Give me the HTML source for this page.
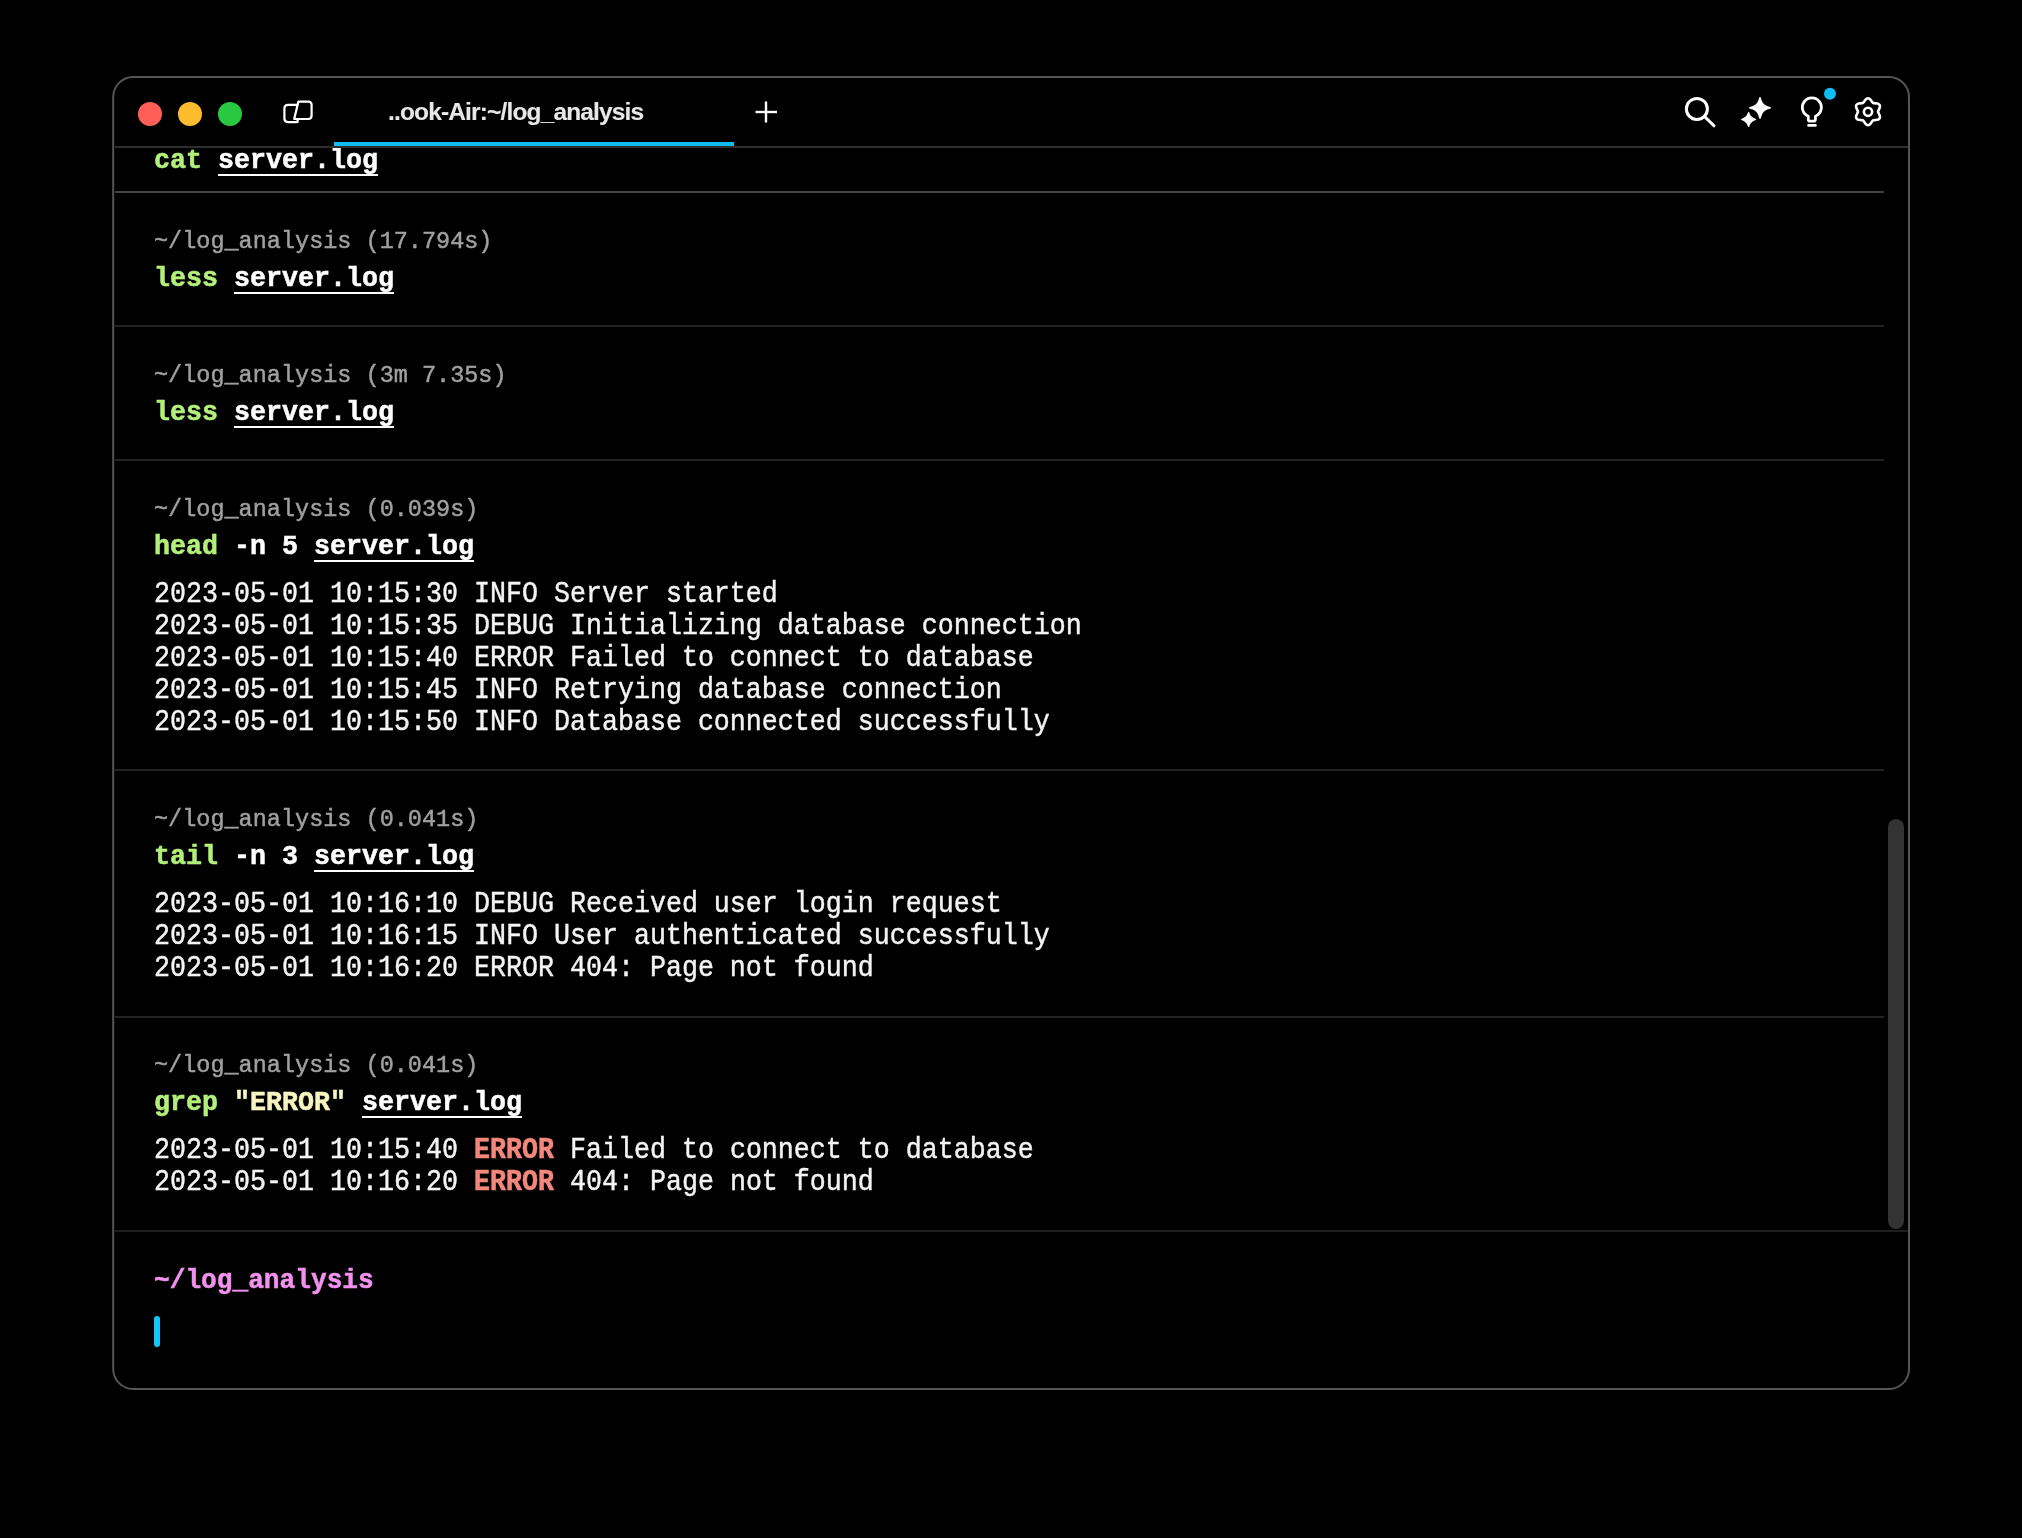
<!DOCTYPE html>
<html><head><meta charset="utf-8">
<style>
html,body{margin:0;padding:0;background:#000;width:2022px;height:1538px;overflow:hidden}
#clip{position:absolute;left:115px;top:148px;width:1793px;height:1240px;overflow:hidden}
.l{position:absolute;left:39px;white-space:pre;font-family:"Liberation Mono",monospace;font-size:26.667px;line-height:32px;height:32px;color:#f4f4f4;transform-origin:0 23px;-webkit-text-stroke:0.3px currentColor;will-change:transform}
.o{transform:scaleY(1.10);-webkit-text-stroke:0.4px currentColor}
.c{transform:scaleY(1.07)}
.p{font-size:23.5px;color:#a0a0a0;transform-origin:0 22px;transform:scaleY(1.05);-webkit-text-stroke:0.45px currentColor}
.g{color:#b3f07a;font-weight:bold;-webkit-text-stroke:0.5px currentColor}
.w{color:#fff;font-weight:bold;-webkit-text-stroke:0.5px currentColor}
.u{}
.ul{position:absolute;height:2px;width:160px;background:#fff}
.r{color:#f3877c;font-weight:bold;-webkit-text-stroke:0.5px currentColor}
.y{color:#f7f5c0;font-weight:bold;-webkit-text-stroke:0.5px currentColor}
.pk{color:#f291ee;font-weight:bold;-webkit-text-stroke:0.5px currentColor;font-size:26.17px;transform:scaleY(1.06)}
#title{position:absolute;left:388px;top:96px;font-family:"Liberation Sans",sans-serif;font-size:24.5px;font-weight:bold;letter-spacing:-0.85px;line-height:32px;color:#e8e8e8;white-space:pre;-webkit-text-stroke:0.1px #e8e8e8;will-change:transform}
svg{position:absolute;left:0;top:0}
</style></head><body>
<svg width="2022" height="1538" viewBox="0 0 2022 1538">
  <rect x="113.2" y="77" width="1795.8" height="1312" rx="20" ry="20" fill="none" stroke="#555" stroke-width="2"/>
  <!-- tab bar line -->
  <rect x="115" y="146" width="1793" height="2" fill="#2e2e2e"/>
  <!-- active tab underline -->
  <rect x="334" y="142" width="400" height="4" fill="#0dbdf5"/>
  <!-- traffic lights -->
  <circle cx="150" cy="114" r="12" fill="#ff5f57"/>
  <circle cx="190" cy="114" r="12" fill="#febc2e"/>
  <circle cx="230" cy="114" r="12" fill="#28c840"/>
  <!-- panel icon -->
  <g fill="none" stroke="#fff" stroke-width="2.2" stroke-linejoin="round">
    <path d="M297.3 104.8 H288 Q284.4 104.8 284.4 108.4 V118.6 Q284.4 122.1 288 122.1 H297.6 V119.2"/>
    <path d="M298.4 101.6 H308.2 Q311.6 101.6 311.6 105 V115.6 Q311.6 119 308.2 119 H294.2 Z"/>
  </g>
  <!-- plus -->
  <g stroke="#fff" stroke-width="2.4">
    <line x1="755.5" y1="112" x2="777" y2="112"/>
    <line x1="766" y1="101.5" x2="766" y2="122.5"/>
  </g>
  <!-- search -->
  <g fill="none" stroke="#fff" stroke-width="3" stroke-linecap="round">
    <circle cx="1696.9" cy="108.9" r="10.5"/>
    <line x1="1704.6" y1="116.6" x2="1714" y2="125.8"/>
  </g>
  <!-- sparkles -->
  <g fill="#fff" stroke="#fff" stroke-width="1.2" stroke-linejoin="round">
    <path d="M1760.00 97.50 C1761.50 103.90 1764.00 106.40 1770.40 107.90 C1764.00 109.40 1761.50 111.90 1760.00 118.30 C1758.50 111.90 1756.00 109.40 1749.60 107.90 C1756.00 106.40 1758.50 103.90 1760.00 97.50Z"/>
    <path d="M1748.60 112.50 C1749.80 116.60 1751.50 118.30 1755.60 119.50 C1751.50 120.70 1749.80 122.40 1748.60 126.50 C1747.40 122.40 1745.70 120.70 1741.60 119.50 C1745.70 118.30 1747.40 116.60 1748.60 112.50Z"/>
  </g>
  <!-- bulb -->
  <g fill="none" stroke="#fff" stroke-width="2.8" stroke-linecap="round" stroke-linejoin="round">
    <path d="M1808.3 116.2 A9.5 9.5 0 1 1 1815.4 116.2 V119.5 Q1815.4 121.2 1813.7 121.2 H1810 Q1808.3 121.2 1808.3 119.5 Z"/>
    <line x1="1808.6" y1="125.4" x2="1815.4" y2="125.4"/>
  </g>
  <circle cx="1830" cy="93.8" r="6" fill="#0dbdf5"/>
  <!-- gear -->
  <g fill="none" stroke="#fff" stroke-width="2.6" stroke-linejoin="round">
    <path d="M1865.66 99.49A2.90 2.90 0 0 1 1870.34 99.49L1872.58 102.55A1.50 1.50 0 0 0 1873.63 103.15L1877.41 103.57A2.90 2.90 0 0 1 1879.74 107.62L1878.22 111.10A1.50 1.50 0 0 0 1878.22 112.30L1879.74 115.78A2.90 2.90 0 0 1 1877.41 119.83L1873.63 120.25A1.50 1.50 0 0 0 1872.58 120.85L1870.34 123.91A2.90 2.90 0 0 1 1865.66 123.91L1863.42 120.85A1.50 1.50 0 0 0 1862.37 120.25L1858.59 119.83A2.90 2.90 0 0 1 1856.26 115.78L1857.78 112.30A1.50 1.50 0 0 0 1857.78 111.10L1856.26 107.62A2.90 2.90 0 0 1 1858.59 103.57L1862.37 103.15A1.50 1.50 0 0 0 1863.42 102.55Z"/>
    <circle cx="1868" cy="111.8" r="4.1"/>
  </g>
</svg>
<div id="title">..ook-Air:~/log_analysis</div>
<div id="clip">
<!-- separators -->
<div style="position:absolute;left:0;top:43px;width:1769px;height:2px;background:#404040"></div>
<div style="position:absolute;left:0;top:177px;width:1769px;height:2px;background:#222"></div>
<div style="position:absolute;left:0;top:311px;width:1769px;height:2px;background:#222"></div>
<div style="position:absolute;left:0;top:621px;width:1769px;height:2px;background:#222"></div>
<div style="position:absolute;left:0;top:868px;width:1769px;height:2px;background:#222"></div>
<div style="position:absolute;left:0;top:1082px;width:1793px;height:1.5px;background:#1e1e1e"></div>
<!-- underlines -->
<div class="ul" style="left:103px;top:26px"></div>
<div class="ul" style="left:119px;top:144px"></div>
<div class="ul" style="left:119px;top:278px"></div>
<div class="ul" style="left:199px;top:412px"></div>
<div class="ul" style="left:199px;top:722px"></div>
<div class="ul" style="left:247px;top:968px"></div>
<!-- scrollbar -->
<div style="position:absolute;left:1773px;top:671px;width:16px;height:410px;border-radius:8px;background:#333"></div>

<div class="l c" style="top:-3px"><span class="g">cat</span> <span class="w u">server.log</span></div>

<div class="l p" style="top:78px">~/log_analysis (17.794s)</div>
<div class="l c" style="top:115px"><span class="g">less</span> <span class="w u">server.log</span></div>

<div class="l p" style="top:212px">~/log_analysis (3m 7.35s)</div>
<div class="l c" style="top:249px"><span class="g">less</span> <span class="w u">server.log</span></div>

<div class="l p" style="top:346px">~/log_analysis (0.039s)</div>
<div class="l c" style="top:383px"><span class="g">head</span><span class="w"> -n 5 </span><span class="w u">server.log</span></div>
<div class="l o" style="top:431px">2023-05-01 10:15:30 INFO Server started</div>
<div class="l o" style="top:463px">2023-05-01 10:15:35 DEBUG Initializing database connection</div>
<div class="l o" style="top:495px">2023-05-01 10:15:40 ERROR Failed to connect to database</div>
<div class="l o" style="top:527px">2023-05-01 10:15:45 INFO Retrying database connection</div>
<div class="l o" style="top:559px">2023-05-01 10:15:50 INFO Database connected successfully</div>

<div class="l p" style="top:656px">~/log_analysis (0.041s)</div>
<div class="l c" style="top:693px"><span class="g">tail</span><span class="w"> -n 3 </span><span class="w u">server.log</span></div>
<div class="l o" style="top:741px">2023-05-01 10:16:10 DEBUG Received user login request</div>
<div class="l o" style="top:773px">2023-05-01 10:16:15 INFO User authenticated successfully</div>
<div class="l o" style="top:805px">2023-05-01 10:16:20 ERROR 404: Page not found</div>

<div class="l p" style="top:902px">~/log_analysis (0.041s)</div>
<div class="l c" style="top:939px"><span class="g">grep</span><span class="w"> </span><span class="y">"ERROR"</span><span class="w"> </span><span class="w u">server.log</span></div>
<div class="l o" style="top:987px">2023-05-01 10:15:40 <span class="r">ERROR</span> Failed to connect to database</div>
<div class="l o" style="top:1019px">2023-05-01 10:16:20 <span class="r">ERROR</span> 404: Page not found</div>

<div class="l pk" style="top:1117px">~/log_analysis</div>
<div style="position:absolute;left:39px;top:1168px;width:6px;height:31px;border-radius:3px;background:#18c4f8"></div>
</div>
</body></html>
